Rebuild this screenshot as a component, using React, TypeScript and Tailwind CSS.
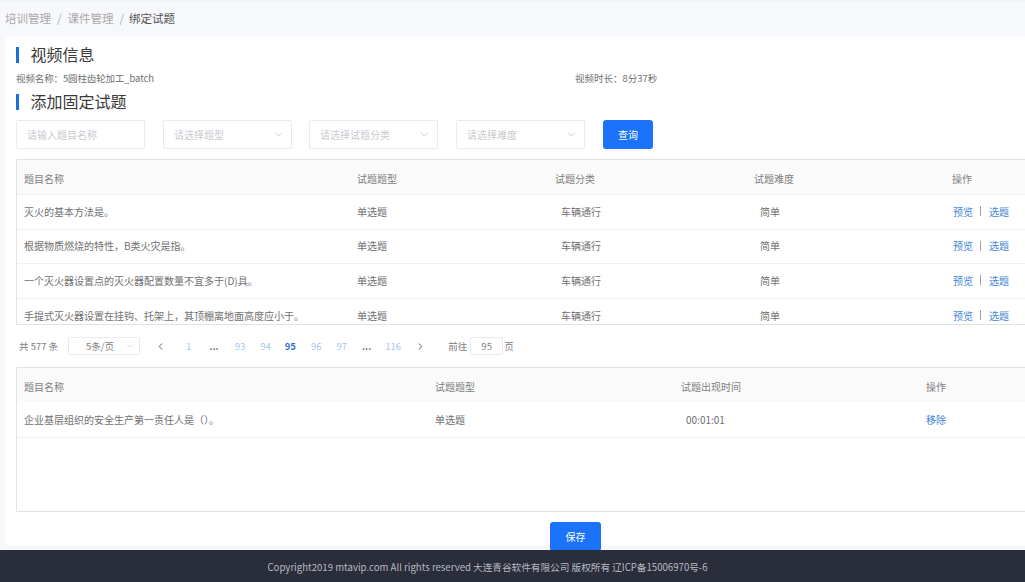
import { ChevronDown, ChevronLeft, ChevronRight } from "lucide-react";

const rows = [
    "灭火的基本方法是。",
    "根据物质燃烧的特性，B类火灾是指。",
    "一个灭火器设置点的灭火器配置数量不宜多于(D)具。",
    "手提式灭火器设置在挂钩、托架上，其顶棚离地面高度应小于。",
];

function Title({ text }: { text: string }) {
    return (
        <div className="flex items-center h-[24px]">
            <div className="w-[2.5px] h-[16px] bg-[#1a6fe0] mr-[12px]"></div>
            <span className="text-[16px] leading-[24px] text-[#3a3a3a] pb-[2px]">{text}</span>
        </div>
    );
}

function Select({ text }: { text: string }) {
    return (
        <div className="w-[129px] h-[29px] border border-[#e8eaee] rounded-[2px] flex items-center justify-between pl-[10px] pr-[6px] pb-[1px] text-[10px] text-[#c8cbd0] bg-white">
            <span>{text}</span>
            <ChevronDown size={13} strokeWidth={1.2} className="text-[#b5b8be]" />
        </div>
    );
}

export default function App() {
    return (
        <div className="w-[1025px] h-[582px] overflow-hidden flex flex-col bg-[#f7f8fb] font-['Noto_Sans_CJK_SC','Noto_Sans',sans-serif]">
            <div className="h-[550px] overflow-hidden flex flex-col">
                <div className="h-[3px] shrink-0 bg-gradient-to-b from-[#edf0f7] to-[#f7f8fb]"></div>
                <div className="h-[33px] flex items-center pl-[5px] text-[11.5px] text-[#aaa] shrink-0 pb-[1px]">
                    <span>培训管理</span>
                    <span className="mx-[6px]">/</span>
                    <span>课件管理</span>
                    <span className="mx-[6px]">/</span>
                    <span className="text-[#555] -ml-[1px]">绑定试题</span>
                </div>

                <div className="ml-[5px] w-[1040px] shrink-0 bg-white rounded-[6px] pl-[11px] pt-[7px] h-[509px]">
                    <Title text="视频信息" />
                    <div className="flex text-[9.5px] leading-[14px] text-[#707070] mt-[4px] h-[14px]">
                        <span className="w-[559px] tracking-[-0.12px]">视频名称：5圆柱齿轮加工_batch</span>
                        <span>视频时长：8分37秒</span>
                    </div>
                    <div className="mt-[5px]">
                        <Title text="添加固定试题" />
                    </div>

                    <div className="flex items-center mt-[6px]">
                        <div className="w-[129px] h-[29px] border border-[#e8eaee] rounded-[2px] flex items-center pl-[10px] pb-[1px] text-[10px] text-[#c8cbd0]">
                            请输入题目名称
                        </div>
                        <div className="ml-[18px]"><Select text="请选择题型" /></div>
                        <div className="ml-[17px]"><Select text="请选择试题分类" /></div>
                        <div className="ml-[18px]"><Select text="请选择难度" /></div>
                        <button className="ml-[18px] w-[50px] h-[29px] bg-[#1a73fa] rounded-[3px] text-white text-[10px] pb-[1px]">查询</button>
                    </div>

                    <div className="mt-[10px] h-[166px] border-l border-y border-[#e0e2e6] overflow-hidden rounded-l-[2px]">
                        <div className="flex h-[35px] pt-[3px] items-center bg-[#fafafa] text-[10px] text-[#808080] border-b border-[#f0f0f0]">
                            <div className="w-[340px] pl-[7px]">题目名称</div>
                            <div className="w-[198px]">试题题型</div>
                            <div className="w-[199px]">试题分类</div>
                            <div className="w-[198px]">试题难度</div>
                            <div>操作</div>
                        </div>
                        {rows.map((row) => (
                            <div key={row} className="flex h-[34.6px] pb-[1px] items-center text-[10px] text-[#707070] border-b border-[#f0f0f0]">
                                <div className="w-[340px] pl-[7px]">{row}</div>
                                <div className="w-[198px]">单选题</div>
                                <div className="w-[199px] pl-[6px]">车辆通行</div>
                                <div className="w-[198px] pl-[6px]">简单</div>
                                <div className="flex items-center text-[#3f86d8] pl-[1px]">
                                    <span>预览</span>
                                    <span className="w-px h-[10px] bg-[#a0a0a0] ml-[7px] mr-[8px]"></span>
                                    <span>选题</span>
                                </div>
                            </div>
                        ))}
                    </div>

                    <div className="flex items-center h-[42px] text-[9.5px] text-[#808080] pl-[3px]">
                        <span>共 577 条</span>
                        <div className="ml-[10px] w-[72px] h-[18px] border border-[#e8eaee] rounded-[2px] flex items-center justify-between pl-[17px] pr-[4px]">
                            <span>5条/页</span>
                            <ChevronDown size={10} strokeWidth={1.2} className="text-[#bbb]" />
                        </div>
                        <ChevronLeft size={11} strokeWidth={2} className="ml-[15px] text-[#555]" />
                        <div className="flex items-center text-[#a9c6ee]">
                            <span className="ml-[20px]">1</span>
                            <span className="ml-[18px] text-[#666] font-bold">...</span>
                            <span className="ml-[16px]">93</span>
                            <span className="ml-[15px]">94</span>
                            <span className="ml-[14px] text-[#2f6fd6] font-bold">95</span>
                            <span className="ml-[15px]">96</span>
                            <span className="ml-[15px]">97</span>
                            <span className="ml-[15px] text-[#666] font-bold">...</span>
                            <span className="ml-[14px]">116</span>
                        </div>
                        <ChevronRight size={11} strokeWidth={2} className="ml-[14px] text-[#555]" />
                        <span className="ml-[22px]">前往</span>
                        <div className="ml-[3px] w-[33px] h-[18px] border border-[#e8eaee] rounded-[2px] flex items-center justify-center">95</div>
                        <span className="ml-[1px]">页</span>
                    </div>

                    <div className="h-[145px] border-l border-y border-[#e0e2e6] rounded-l-[2px]">
                        <div className="flex h-[35px] pt-[1px] items-center bg-[#fafafa] text-[10px] text-[#808080]">
                            <div className="w-[418px] pl-[7px]">题目名称</div>
                            <div className="w-[246px]">试题题型</div>
                            <div className="w-[245px]">试题出现时间</div>
                            <div>操作</div>
                        </div>
                        <div className="flex h-[35px] pb-[1px] items-center text-[10px] text-[#707070] border-b border-[#f0f0f0]">
                            <div className="w-[418px] pl-[7px]">企业基层组织的安全生产第一责任人是（）。</div>
                            <div className="w-[246px]">单选题</div>
                            <div className="w-[245px] pl-[5px]">00:01:01</div>
                            <div className="text-[#3f86d8]">移除</div>
                        </div>
                    </div>

                    <div className="flex mt-[10px] pl-[534px]">
                        <button className="w-[51px] h-[29px] bg-[#1a73fa] rounded-[3px] text-white text-[10px] shrink-0">保存</button>
                    </div>
                </div>
            </div>

            <div className="h-[32px] bg-[#2a2d3a] flex items-center justify-center pr-[50px] pt-[3px] text-[9.65px] text-[#b9bbc1]">
                Copyright2019 mtavip.com All rights reserved 大连青谷软件有限公司 版权所有 辽ICP备15006970号-6
            </div>
        </div>
    );
}
